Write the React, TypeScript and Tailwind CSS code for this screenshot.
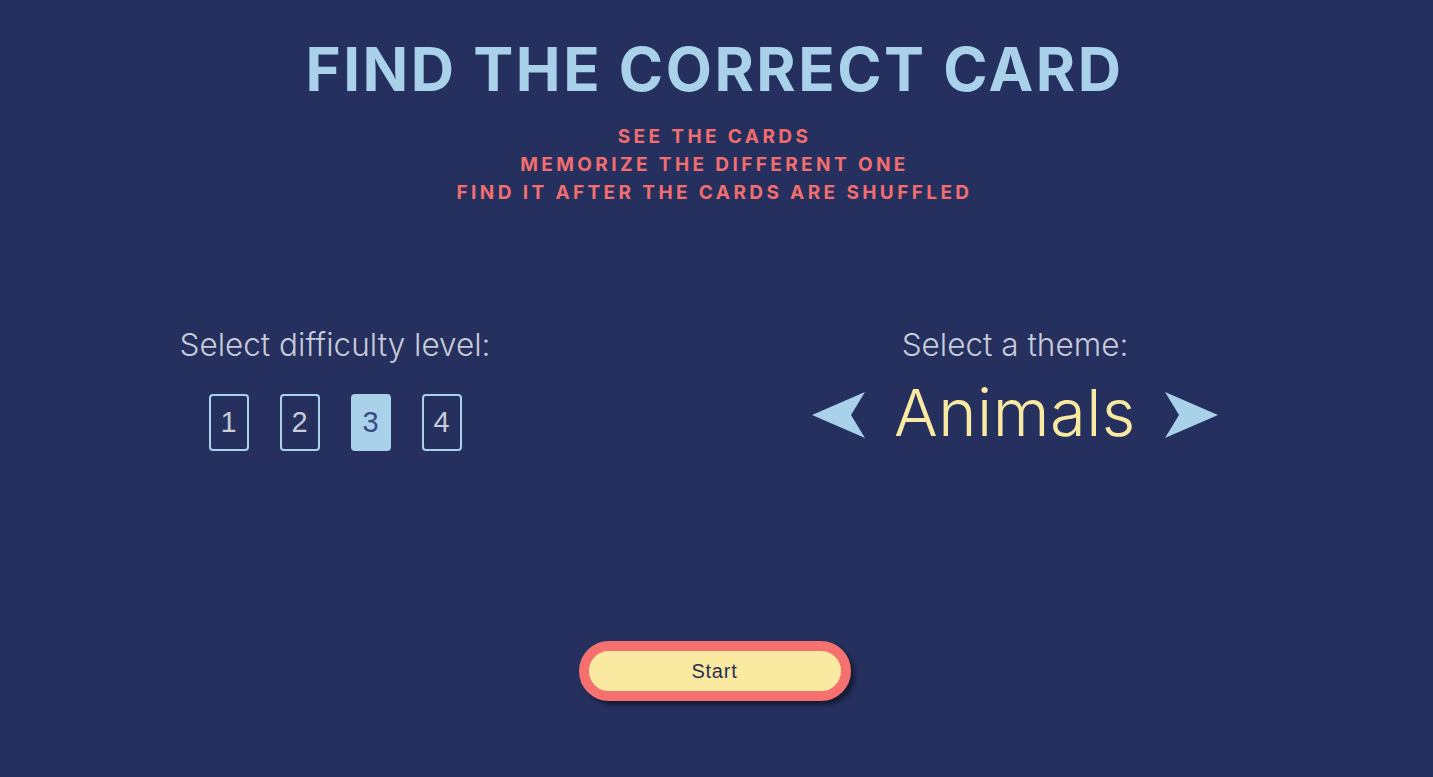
import React, { useState } from "react";

export default function App() {
  const [level, setLevel] = useState(3);
  return (
    <div className="min-h-[777px] w-full bg-[#25305f] flex flex-col items-center pr-[4px]" style={{ fontFamily: "Inter, 'Noto Sans', sans-serif" }}>
      <h1 className="mt-[33px] text-[60px] leading-[72px] font-bold text-[#a9d1ea] tracking-[2.5px]">FIND THE CORRECT CARD</h1>
      <div className="mt-[18px] flex flex-col items-center text-[19px] leading-[28px] font-bold tracking-[3.4px] text-[#f26d6d]">
        <p>SEE THE CARDS</p>
        <p>MEMORIZE THE DIFFERENT ONE</p>
        <p>FIND IT AFTER THE CARDS ARE SHUFFLED</p>
      </div>
      <div className="mt-[117px] flex w-full gap-[10px]">
        <div className="w-[670px] flex flex-col items-center">
          <p className="text-[31.5px] leading-[42px] font-light text-[#c8cbd8]">Select difficulty level:</p>
          <div className="mt-[28px] flex gap-[31px]" style={{ fontFamily: "'Liberation Sans', Arial, sans-serif" }}>
            {[1, 2, 3, 4].map((n) => (
              <button
                key={n}
                onClick={() => setLevel(n)}
                className={
                  n === level
                    ? "w-[40px] h-[57px] rounded-[4px] border-2 border-[#a9d1ea] bg-[#a9d1ea] text-[#3a4a85] text-[29px] flex items-center justify-center"
                    : "w-[40px] h-[57px] rounded-[4px] border-2 border-[#a9d1ea] bg-transparent text-[#c8cbd8] text-[29px] flex items-center justify-center"
                }
              >
                {n}
              </button>
            ))}
          </div>
        </div>
        <div className="w-[670px] flex flex-col items-center">
          <p className="text-[31.5px] leading-[42px] font-light text-[#c8cbd8]">Select a theme:</p>
          <div className="mt-[8px] flex items-center gap-[28px]">
            <svg width="54" height="48" viewBox="0 0 54 48" className="mt-[4px]">
              <polygon points="0,24 53,1 39,24 53,47" fill="#a9d1ea" />
            </svg>
            <span className="text-[65px] leading-[78px] font-light tracking-[0.5px] text-[#f9e9a1]">Animals</span>
            <svg width="54" height="48" viewBox="0 0 54 48" className="mt-[4px]">
              <polygon points="54,24 1,1 15,24 1,47" fill="#a9d1ea" />
            </svg>
          </div>
        </div>
      </div>
      <button
        className="mt-[189px] w-[272px] h-[60px] rounded-full border-[10px] border-[#f4716f] bg-[#f9e9a1] text-[#2a3050] text-[20px] tracking-[0.8px] shadow-[4px_4px_4px_rgba(0,0,0,0.45)]"
        style={{ fontFamily: "'Liberation Sans', Arial, sans-serif" }}
      >
        Start
      </button>
    </div>
  );
}
